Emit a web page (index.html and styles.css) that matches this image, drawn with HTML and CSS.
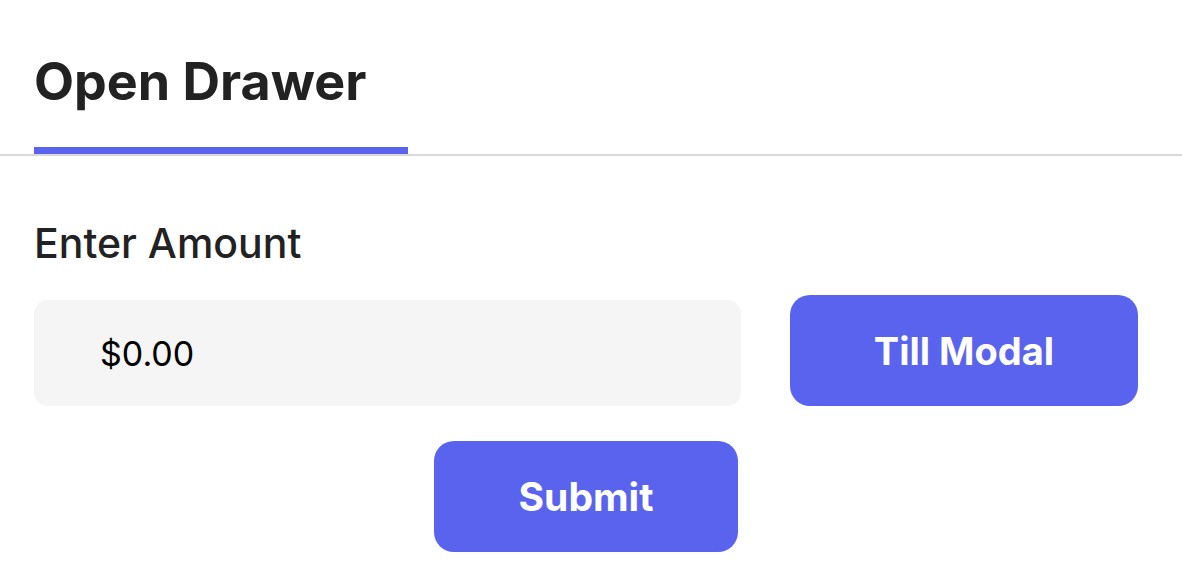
FILE: index.html
```html
<!DOCTYPE html>
<html>
<head>
<meta charset="utf-8">
<link rel="stylesheet" href="styles.css">
</head>
<body>
<div class="tabs">
  <div class="tab active">Open Drawer</div>
</div>
<div class="content">
  <div class="label">Enter Amount</div>
  <div class="row">
    <div class="input">$0.00</div>
    <button class="btn till">Till Modal</button>
  </div>
  <div class="submit-row">
    <button class="btn submit">Submit</button>
  </div>
</div>
</body>
</html>
```
FILE: styles.css
```css
html, body {
  margin: 0;
  padding: 0;
  background: #fff;
  font-family: Inter, "Noto Sans", sans-serif;
  color: #222;
}
.tabs {
  border-bottom: 2px solid #d9d9d9;
  padding-left: 34px;
  display: flex;
}
.tab {
  font-size: 52px;
  font-weight: 700;
  width: 374px;
  padding-top: 52px;
  line-height: 60px;
  border-bottom: 7px solid #5a63ee;
  box-sizing: border-box;
  height: 154px;
}
.content {
  width: 1104px;
  margin-left: 34px;
}
.label {
  margin-top: 64px;
  font-size: 41px;
  font-weight: 500;
  line-height: 46px;
}
.row {
  display: flex;
  align-items: flex-end;
  gap: 49px;
  margin-top: 29px;
}
.input {
  width: 707px;
  height: 106px;
  background: #f5f5f5;
  border-radius: 14px;
  box-sizing: border-box;
  padding-left: 66px;
  display: flex;
  align-items: center;
  font-size: 34px;
  color: #000;
}
.btn {
  border: none;
  background: #5a63ee;
  color: #fff;
  font-family: Inter, "Noto Sans", sans-serif;
  font-weight: 700;
  font-size: 38px;
  border-radius: 20px;
  height: 111px;
  padding: 0;
}
.till {
  width: 348px;
}
.submit-row {
  display: flex;
  justify-content: center;
  margin-top: 35px;
}
.submit {
  width: 304px;
  font-size: 39px;
}
```
